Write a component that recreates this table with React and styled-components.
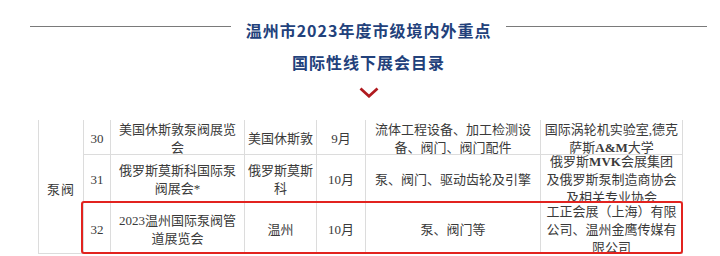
import React from 'react';
import styled, { createGlobalStyle } from 'styled-components';

const Global = createGlobalStyle`
  html, body { margin: 0; padding: 0; background: #ffffff; }
  body { width: 720px; height: 256px; overflow: hidden; }
`;

const Page = styled.main`
  display: flex;
  flex-direction: column;
  width: 720px;
`;

const Header = styled.header`
  display: flex;
  flex-direction: column;
  align-items: center;
  padding: 18px 13px 0 30px;
`;

const TitleRow = styled.div`
  display: flex;
  align-items: center;
  gap: 15px;
  width: 100%;
`;

const Rule = styled.span`
  flex: 1;
  height: 1px;
  background: #7a7a7a;
  margin-bottom: 8px;
`;

const Title = styled.h1`
  margin: 0;
  font-family: "Noto Sans CJK SC", "Noto Sans", sans-serif;
  font-weight: 700;
  font-size: 16px;
  line-height: 24px;
  color: #22417b;
  white-space: nowrap;
  letter-spacing: 1px;
  margin-top: ${(p) => p.$top || 0}px;
`;

const Chevron = styled.svg`
  display: block;
  margin-top: 13px;
`;

const Table = styled.section`
  display: grid;
  grid-template-columns: 44px 26px 133px 71px 48px 174px 141px;
  grid-template-rows: 34px 47px 50px;
  gap: 1px;
  padding: 0 1px 1px;
  background: #dcdcdc;
  width: max-content;
  margin: 22px 0 0 38px;
  font-family: "Liberation Serif", "Noto Sans CJK SC", serif;
  font-size: 13px;
  line-height: 18px;
  color: #3a3a3a;
`;

const Cell = styled.div`
  grid-row: ${(p) => p.$row};
  grid-column: ${(p) => p.$col};
  background: #ffffff;
  display: flex;
  flex-direction: column;
  justify-content: center;
  align-items: center;
  text-align: center;
  white-space: nowrap;
  overflow: hidden;
  padding-top: 3px;
  box-sizing: border-box;
`;

const Category = styled(Cell)`
  letter-spacing: 1px;
  padding-top: 6px;
`;

const Highlight = styled.div`
  grid-column: 2 / -1;
  grid-row: 3;
  margin: -2px -1px -1px -3px;
  border: 2px solid #e2231f;
  border-radius: 3px;
  z-index: 1;
  pointer-events: none;
`;

const Latin = styled.b`
  font-weight: 700;
`;

const rows = [
  {
    no: '30',
    name: ['美国休斯敦泵阀展览', '会'],
    city: ['美国休斯敦'],
    month: '9月',
    products: ['流体工程设备、加工检测设', '备、阀门、阀门配件'],
    org: ['国际涡轮机实验室,德克', <>萨斯<Latin>A&amp;M</Latin>大学</>],
  },
  {
    no: '31',
    name: ['俄罗斯莫斯科国际泵', '阀展会*'],
    city: ['俄罗斯莫斯', '科'],
    month: '10月',
    products: ['泵、阀门、驱动齿轮及引擎'],
    org: [<>俄罗斯<Latin>MVK</Latin>会展集团</>, '及俄罗斯泵制造商协会', '及相关专业协会'],
  },
  {
    no: '32',
    name: ['2023温州国际泵阀管', '道展览会'],
    city: ['温州'],
    month: '10月',
    products: ['泵、阀门等'],
    org: ['工正会展（上海）有限', '公司、温州金鹰传媒有', '限公司'],
  },
];

const Lines = ({ lines }) => lines.map((l, i) => <span key={i}>{l}</span>);

export default function App() {
  return (
    <Page>
      <Global />
      <Header>
        <TitleRow>
          <Rule />
          <Title>温州市2023年度市级境内外重点</Title>
          <Rule />
        </TitleRow>
        <Title as="h2" $top={8}>国际性线下展会目录</Title>
        <Chevron width="20" height="11" viewBox="0 0 20 11" aria-hidden="true">
          <polyline points="1.5,1.5 10,9.2 18.5,1.5" fill="none" stroke="#b01a1f" strokeWidth="2.8" />
        </Chevron>
      </Header>
      <Table>
        <Category $row="1 / span 3" $col="1">泵阀</Category>
        {rows.map((r, i) => {
          const row = i + 1;
          return (
            <React.Fragment key={r.no}>
              <Cell $row={row} $col={2}>{r.no}</Cell>
              <Cell $row={row} $col={3}><Lines lines={r.name} /></Cell>
              <Cell $row={row} $col={4}><Lines lines={r.city} /></Cell>
              <Cell $row={row} $col={5}>{r.month}</Cell>
              <Cell $row={row} $col={6}><Lines lines={r.products} /></Cell>
              <Cell $row={row} $col={7}><Lines lines={r.org} /></Cell>
            </React.Fragment>
          );
        })}
        <Highlight />
      </Table>
    </Page>
  );
}
